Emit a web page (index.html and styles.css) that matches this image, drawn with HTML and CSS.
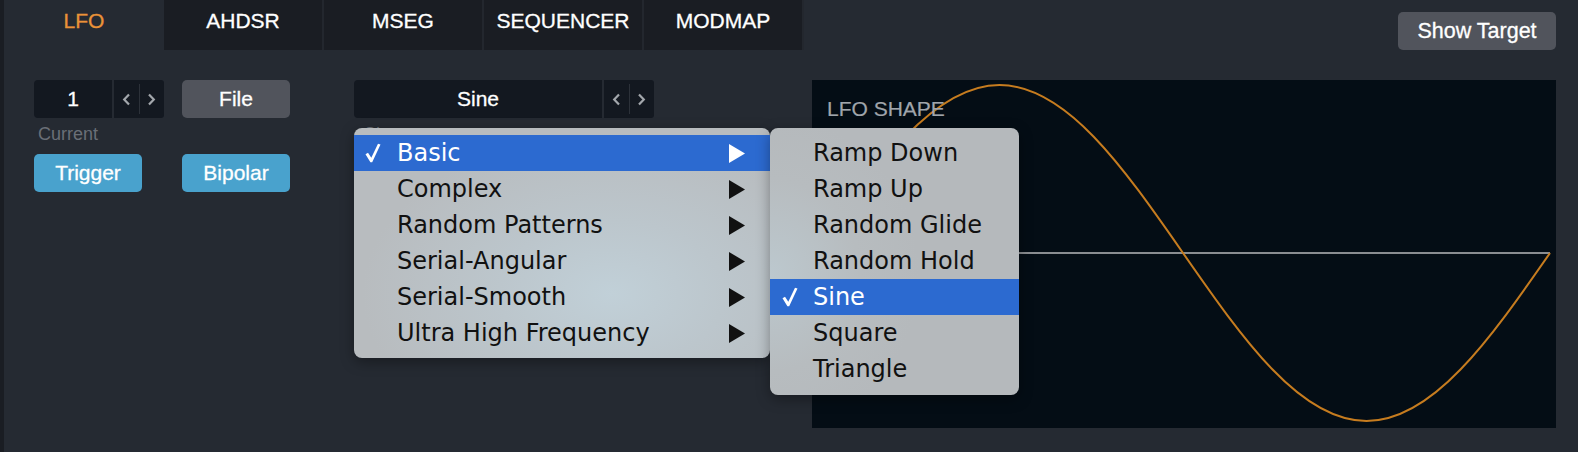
FILE: index.html
```html
<!DOCTYPE html>
<html>
<head>
<meta charset="utf-8">
<link rel="stylesheet" href="styles.css">
</head>
<body>
<div class="app">
  <div class="edge"></div>
  <div class="main">
    <div class="topbar">
      <nav class="tabs">
        <div class="tab active">LFO</div>
        <div class="tab">AHDSR</div>
        <div class="tab">MSEG</div>
        <div class="tab">SEQUENCER</div>
        <div class="tab">MODMAP</div>
      </nav>
      <div class="spacer"></div>
      <button class="btn grey show">Show Target</button>
    </div>
    <div class="content">
      <div class="controls">
        <div class="stepper">
          <div class="field num">1</div>
          <div class="arrows">
            <span class="arr"><svg width="9" height="13" viewBox="0 0 9 13"><polyline points="7,1.5 2.2,6.5 7,11.5" /></svg></span>
            <span class="div"></span>
            <span class="arr"><svg width="9" height="13" viewBox="0 0 9 13"><polyline points="2,1.5 6.8,6.5 2,11.5" /></svg></span>
          </div>
        </div>
        <button class="btn grey">File</button>
        <div class="label">Current</div>
        <div></div>
        <button class="btn blue">Trigger</button>
        <button class="btn blue">Bipolar</button>
      </div>
      <div class="shape">
        <div class="stepper">
          <div class="field sel">Sine</div>
          <div class="arrows">
            <span class="arr"><svg width="9" height="13" viewBox="0 0 9 13"><polyline points="7,1.5 2.2,6.5 7,11.5" /></svg></span>
            <span class="div"></span>
            <span class="arr"><svg width="9" height="13" viewBox="0 0 9 13"><polyline points="2,1.5 6.8,6.5 2,11.5" /></svg></span>
          </div>
        </div>
        <div class="label">Shape</div>
      </div>
      <div class="display">
        <div class="disp-label">LFO SHAPE</div>
        <svg class="wave" width="744" height="348" viewBox="0 0 744 348">
          <line x1="4" y1="173" x2="738" y2="173" class="zero"/>
          <path class="sine" d="M4,173 C63.85,86.93 121.09,5 187.5,5 C253.91,5 311.15,86.93 371,173 C430.85,259.07 488.09,341 554.5,341 C620.91,341 678.15,259.07 738,173"/>
        </svg>
      </div>
    </div>
  </div>

  <div class="menu menu-main">
    <div class="item hl"><span class="check"><svg width="16" height="20" viewBox="0 0 16 20"><polygon points="0.5,11.2 3,9.8 6.3,14.8 13,0.8 15.5,1.6 7.2,19.2 5.4,19.2"/></svg></span><span class="txt">Basic</span><svg class="tri" width="18" height="19" viewBox="0 0 18 19"><polygon points="1,0 17,9.5 1,19"/></svg></div>
    <div class="item"><span class="check"></span><span class="txt">Complex</span><svg class="tri" width="18" height="19" viewBox="0 0 18 19"><polygon points="1,0 17,9.5 1,19"/></svg></div>
    <div class="item"><span class="check"></span><span class="txt">Random Patterns</span><svg class="tri" width="18" height="19" viewBox="0 0 18 19"><polygon points="1,0 17,9.5 1,19"/></svg></div>
    <div class="item"><span class="check"></span><span class="txt">Serial-Angular</span><svg class="tri" width="18" height="19" viewBox="0 0 18 19"><polygon points="1,0 17,9.5 1,19"/></svg></div>
    <div class="item"><span class="check"></span><span class="txt">Serial-Smooth</span><svg class="tri" width="18" height="19" viewBox="0 0 18 19"><polygon points="1,0 17,9.5 1,19"/></svg></div>
    <div class="item"><span class="check"></span><span class="txt">Ultra High Frequency</span><svg class="tri" width="18" height="19" viewBox="0 0 18 19"><polygon points="1,0 17,9.5 1,19"/></svg></div>
  </div>

  <div class="menu menu-sub">
    <div class="item"><span class="check"></span><span class="txt">Ramp Down</span></div>
    <div class="item"><span class="check"></span><span class="txt">Ramp Up</span></div>
    <div class="item"><span class="check"></span><span class="txt">Random Glide</span></div>
    <div class="item"><span class="check"></span><span class="txt">Random Hold</span></div>
    <div class="item hl"><span class="check"><svg width="16" height="20" viewBox="0 0 16 20"><polygon points="0.5,11.2 3,9.8 6.3,14.8 13,0.8 15.5,1.6 7.2,19.2 5.4,19.2"/></svg></span><span class="txt">Sine</span></div>
    <div class="item"><span class="check"></span><span class="txt">Square</span></div>
    <div class="item"><span class="check"></span><span class="txt">Triangle</span></div>
  </div>
</div>
</body>
</html>
```

FILE: styles.css
```css
html, body {
  margin: 0;
  padding: 0;
  background: #252a32;
}
body {
  font-family: "Liberation Sans", Arial, sans-serif;
  width: 1578px;
  height: 452px;
  overflow: hidden;
}
.app {
  position: relative;
  display: flex;
  width: 1578px;
  height: 452px;
}
.edge {
  width: 4px;
  background: #1a1d23;
}
.main {
  flex: 1;
  display: flex;
  flex-direction: column;
}
.topbar {
  display: flex;
  align-items: flex-start;
  height: 50px;
  padding-right: 22px;
}
.tabs {
  display: flex;
  gap: 2px;
  background: #23272e;
  height: 50px;
  padding-right: 2px;
}
.tab {
  width: 158px;
  height: 50px;
  box-sizing: border-box;
  padding-top: 10px;
  line-height: 21px;
  font-size: 21px;
  color: #ffffff;
  text-align: center;
  background: #1a1d23;
  -webkit-text-stroke: 0.3px currentColor;
}
.tab.active {
  width: 160px;
  background: #252a32;
  color: #ea9238;
  margin-right: -2px;
}
.spacer { flex: 1; }
.btn {
  border: none;
  font-family: "Liberation Sans", Arial, sans-serif;
  font-size: 21px;
  color: #ffffff;
  border-radius: 5px;
  height: 38px;
  padding: 0;
  line-height: 38px;
  text-align: center;
  -webkit-text-stroke: 0.3px currentColor;
}
.btn.grey { background: #51545c; }
.btn.blue { background: #49a2cd; }
.show {
  margin-top: 12px;
  width: 158px;
  line-height: 36px;
  font-size: 21.5px;
}
.content {
  display: flex;
  align-items: flex-start;
  padding: 30px 22px 0 30px;
}
.controls {
  display: grid;
  grid-template-columns: 130px 108px;
  column-gap: 18px;
  width: 256px;
}
.controls .btn.blue { width: 108px; margin-top: 11px; }
.controls .btn.grey { width: 108px; }
.stepper {
  display: flex;
  gap: 2px;
  height: 38px;
}
.field {
  background: #131820;
  color: #ffffff;
  font-size: 21px;
  line-height: 38px;
  text-align: center;
  border-radius: 4px 0 0 4px;
  -webkit-text-stroke: 0.3px currentColor;
}
.num { width: 78px; }
.sel { width: 248px; }
.arrows {
  width: 50px;
  background: #131820;
  border-radius: 0 3px 3px 0;
  display: flex;
  align-items: center;
}
.arr {
  flex: 1;
  display: flex;
  justify-content: center;
  align-items: center;
}
.arr svg polyline {
  fill: none;
  stroke: #a3a7ac;
  stroke-width: 2.2;
}
.arrows .div {
  width: 1px;
  height: 30px;
  background: #2c3139;
}
.label {
  margin-top: 7px;
  font-size: 18px;
  line-height: 18px;
  color: #6a6f77;
  padding-left: 4px;
}
.shape {
  margin-left: 64px;
  width: 300px;
  display: flex;
  flex-direction: column;
}
.shape .label { padding-left: 10px; }
.display {
  position: relative;
  margin-left: 158px;
  flex: 1;
  height: 348px;
  background: #040d15;
}
.disp-label {
  position: absolute;
  left: 15px;
  top: 18px;
  font-size: 21px;
  line-height: 21px;
  color: #a0a5ab;
  -webkit-text-stroke: 0.2px currentColor;
}
.wave {
  display: block;
}
.zero {
  stroke: #8a8d91;
  stroke-width: 2;
}
.sine {
  fill: none;
  stroke: #c67c1f;
  stroke-width: 2;
}
.menu {
  position: absolute;
  top: 128px;
  box-sizing: border-box;
  border-radius: 8px;
  padding: 7px 0;
  font-family: "DejaVu Sans", "Lucida Grande", sans-serif;
  font-size: 24px;
  color: #111111;
  box-shadow: 0 4px 14px rgba(0, 0, 0, 0.35);
}
.menu-main {
  left: 354px;
  width: 416px;
  height: 230px;
  background: radial-gradient(ellipse 60% 70% at 62% 72%, #c1d0d8 0%, #bcc6cc 45%, #b8bcbf 100%);
}
.menu-sub {
  left: 770px;
  width: 249px;
  height: 267px;
  padding-bottom: 8px;
  background: radial-gradient(ellipse 60% 60% at 0% 55%, #bcc8ce 0%, #b7bcbf 60%, #b5b9bc 100%);
}
.item {
  display: flex;
  align-items: center;
  height: 36px;
  line-height: 36px;
}
.item.hl {
  background: #2c6ad0;
  color: #ffffff;
}
.check {
  width: 32px;
  padding-left: 11px;
  display: flex;
  align-items: center;
  height: 36px;
}
.check polygon { fill: #ffffff; }
.menu-sub .check { padding-left: 12px; width: 31px; }
.txt { flex: 1; }
.tri {
  margin-right: 24px;
}
.tri polygon { fill: #111111; }
.item.hl .tri polygon { fill: #ffffff; }
```
